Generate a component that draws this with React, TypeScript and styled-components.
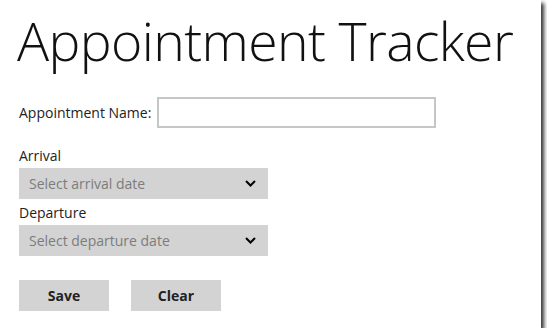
import styled, {createGlobalStyle} from 'styled-components';

const GlobalStyle = createGlobalStyle`
  html, body {
    margin: 0;
    padding: 0;
    background: #fff;
  }
  body {
    font-family: "Open Sans", "Noto Sans", sans-serif;
  }
`;

const Chevron = () => (
    <svg width="11" height="7" viewBox="0 0 11 7">
        <path d="M1 1 L5.5 5.5 L10 1" fill="none" stroke="#000" strokeWidth="2" />
    </svg>
);

const DateSelect = ({placeholder}: {placeholder: string}) => (
    <SelectBox>
        <Placeholder>{placeholder}</Placeholder>
        <Chevron />
    </SelectBox>
);

export default function App() {
    return (
        <>
            <GlobalStyle />
            <Frame>
                <Title>Appointment Tracker</Title>

                <NameRow>
                    <Label>Appointment Name:</Label>
                    <NameInput />
                </NameRow>

                <Field>
                    <Label>Arrival</Label>
                    <DateSelect placeholder="Select arrival date" />
                </Field>

                <Field $gap={5}>
                    <Label>Departure</Label>
                    <DateSelect placeholder="Select departure date" />
                </Field>

                <Buttons>
                    <Button>Save</Button>
                    <Button>Clear</Button>
                </Buttons>
            </Frame>
        </>
    );
}

const Frame = styled.div`
  width: 541px;
  height: 328px;
  box-sizing: border-box;
  padding: 0 0 0 19px;
  background: #fff;
  box-shadow: 3px 3px 4px #333;
  display: flex;
  flex-direction: column;
`;

const Title = styled.h1`
  margin: 8px 0 0 -2px;
  font-size: 53.5px;
  font-weight: 300;
  line-height: 66px;
  color: #111;
  letter-spacing: -0.6px;
`;

const NameRow = styled.div`
  margin-top: 23px;
  display: flex;
  align-items: center;
  gap: 6px;
`;

const Label = styled.div`
  font-size: 14px;
  line-height: 18px;
  color: #222;
`;

const NameInput = styled.div`
  width: 279px;
  height: 31px;
  box-sizing: border-box;
  border: 2px solid #c6c6c6;
  background: #fff;
`;

const Field = styled.div<{$gap?: number}>`
  margin-top: ${p => p.$gap ?? 19}px;
  display: flex;
  flex-direction: column;
  gap: 3px;
`;

const SelectBox = styled.div`
  width: 249px;
  height: 31px;
  box-sizing: border-box;
  padding: 0 12px 0 10px;
  background: #d3d3d3;
  display: flex;
  align-items: center;
  justify-content: space-between;
`;

const Placeholder = styled.span`
  font-size: 14px;
  color: #7c7c7c;
`;

const Buttons = styled.div`
  margin-top: 24px;
  display: flex;
  gap: 22px;
`;

const Button = styled.button`
  width: 90px;
  height: 31px;
  border: none;
  background: #d3d3d3;
  font-family: "Open Sans", "Noto Sans", sans-serif;
  font-size: 14px;
  font-weight: 700;
  color: #222;
  padding: 0;
`;
